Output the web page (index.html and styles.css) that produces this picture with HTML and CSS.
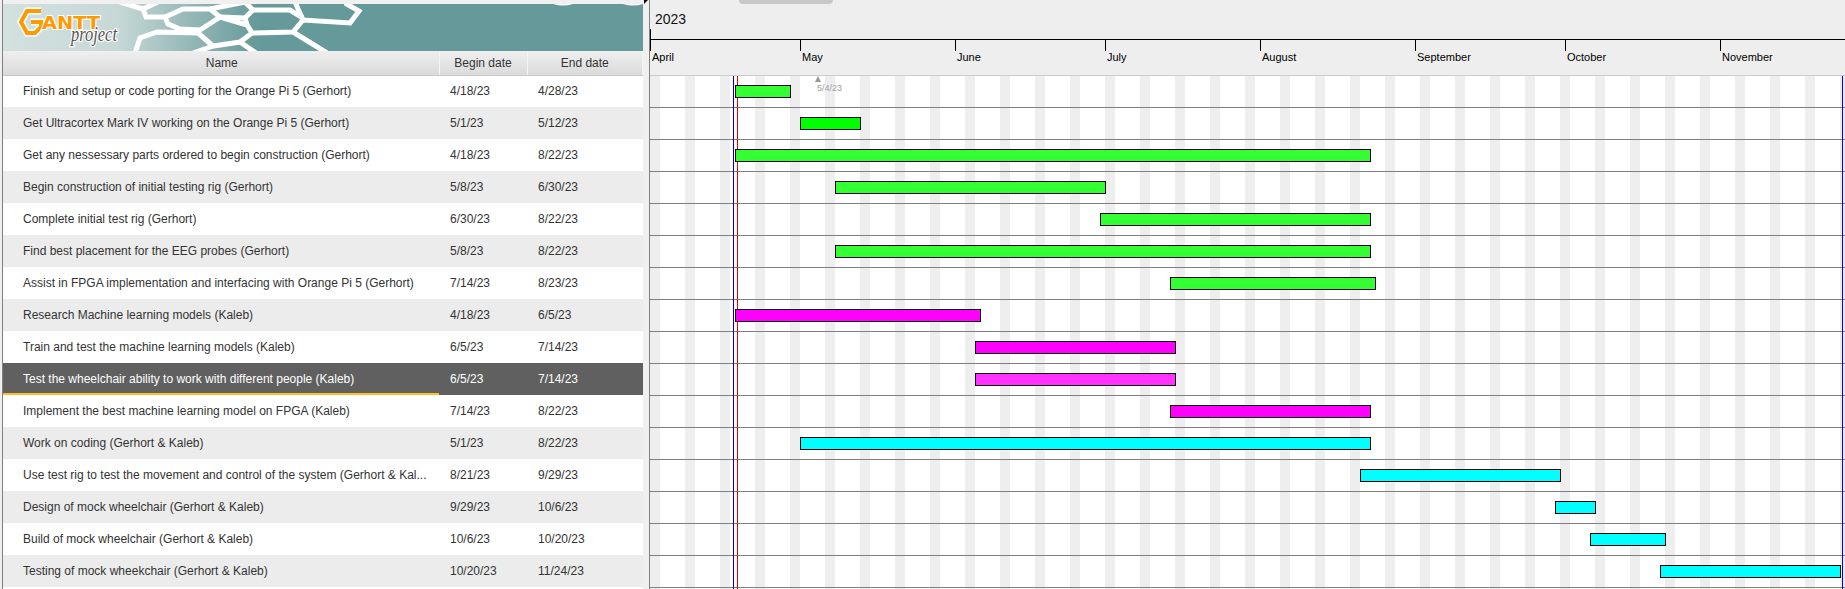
FILE: index.html
```html
<!DOCTYPE html>
<html>
<head>
    <meta charset="UTF-8">
    <meta name="viewport" content="width=device-width, initial-scale=1.0">
    <title>GanttProject</title>
    <link rel="stylesheet" href="styles.css">
</head>
<body>
    <div class="task-panel">
        <svg class="banner" viewBox="3 4 640 47" width="640" height="47">
            <defs>
                <linearGradient id="banner-fade" x1="0" x2="1" y1="0" y2="0">
                    <stop offset="0" stop-color="#d3e1df"/>
                    <stop offset="0.18" stop-color="#c6d8d6"/>
                    <stop offset="0.4" stop-color="#669999"/>
                    <stop offset="1" stop-color="#669999"/>
                </linearGradient>
            </defs>
            <rect x="3" y="4" width="640" height="47" fill="url(#banner-fade)"/>
            <!-- honeycomb -->
            <g class="comb">
                <path d="M120 2 L143 9 L146 17 L165 17 L168 24 L180 29 L200 30"/>
                <path d="M143 9 L158 2"/>
                <path d="M165 17 L183 9 L210 9 L220 17 L200 30 L198 33 L213 46 L240 42 L252 33 L247 25 L220 17"/>
                <path d="M210 9 L245 2"/>
                <path d="M220 17 L245 18 L253 10 L245 2"/>
                <path d="M245 18 L247 25"/>
                <path d="M253 10 L290 10 L303 18"/>
                <path d="M252 33 L293 32 L303 20 L350 23 L359 11 L345 3"/>
                <path d="M303 20 L295 2"/>
                <path d="M293 32 L327 53"/>
                <path d="M198 33 L157 32 L140 38 L135 53"/>
                <path d="M213 46 L193 53"/>
                <path d="M240 42 L256 53"/>
            </g>
            <path class="comb-top" d="M553 4 Q563 7 573 4 Z M623 4 Q633 7 643 4 Z"/>
            <!-- logo -->
            <polyline class="logo-edge" points="31,22 41,22 41,27 35,33 27,33 21,22 27,11 41,11"/>
            <polyline class="logo-mark" points="31,22 41,22 41,27 35,33 27,33 21,22 27,11 41,11"/>
            <text class="logo-word" x="42" y="29" textLength="58" lengthAdjust="spacingAndGlyphs">ANTT</text>
            <text class="logo-sub" x="71" y="41" textLength="46" lengthAdjust="spacingAndGlyphs">project</text>
        </svg>
        <table class="task-table">
            <thead>
                <tr>
                    <th class="col-name">Name</th>
                    <th class="col-date">Begin date</th>
                    <th class="col-end">End date</th>
                </tr>
            </thead>
            <tbody>
                <tr><td>Finish and setup or code porting for the Orange Pi 5 (Gerhort)</td><td>4/18/23</td><td>4/28/23</td></tr>
                <tr><td>Get Ultracortex Mark IV working on the Orange Pi 5 (Gerhort)</td><td>5/1/23</td><td>5/12/23</td></tr>
                <tr><td>Get any nessessary parts ordered to begin construction (Gerhort)</td><td>4/18/23</td><td>8/22/23</td></tr>
                <tr><td>Begin construction of initial testing rig (Gerhort)</td><td>5/8/23</td><td>6/30/23</td></tr>
                <tr><td>Complete initial test rig (Gerhort)</td><td>6/30/23</td><td>8/22/23</td></tr>
                <tr><td>Find best placement for the EEG probes (Gerhort)</td><td>5/8/23</td><td>8/22/23</td></tr>
                <tr><td>Assist in FPGA implementation and interfacing with Orange Pi 5 (Gerhort)</td><td>7/14/23</td><td>8/23/23</td></tr>
                <tr><td>Research Machine learning models (Kaleb)</td><td>4/18/23</td><td>6/5/23</td></tr>
                <tr><td>Train and test the machine learning models (Kaleb)</td><td>6/5/23</td><td>7/14/23</td></tr>
                <tr class="selected"><td>Test the wheelchair ability to work with different people (Kaleb)</td><td>6/5/23</td><td>7/14/23</td></tr>
                <tr><td>Implement the best machine learning model on FPGA (Kaleb)</td><td>7/14/23</td><td>8/22/23</td></tr>
                <tr><td>Work on coding (Gerhort &amp; Kaleb)</td><td>5/1/23</td><td>8/22/23</td></tr>
                <tr><td>Use test rig to test the movement and control of the system (Gerhort &amp; Kal...</td><td>8/21/23</td><td>9/29/23</td></tr>
                <tr><td>Design of mock wheelchair (Gerhort &amp; Kaleb)</td><td>9/29/23</td><td>10/6/23</td></tr>
                <tr><td>Build of mock wheelchair (Gerhort &amp; Kaleb)</td><td>10/6/23</td><td>10/20/23</td></tr>
                <tr><td>Testing of mock wheekchair (Gerhort &amp; Kaleb)</td><td>10/20/23</td><td>11/24/23</td></tr>
            </tbody>
        </table>
    </div>

    <div class="splitter"></div>

    <div class="chart">
        <div class="chart-head">
            <div class="scroll-thumb"></div>
            <div class="year">2023</div>
            <div class="year-tick"></div>
            <div class="months">
                <div class="month m30">April</div>
                <div class="month m31">May</div>
                <div class="month m30">June</div>
                <div class="month m31">July</div>
                <div class="month m31">August</div>
                <div class="month m30">September</div>
                <div class="month m31">October</div>
                <div class="month m30">November</div>
            </div>
        </div>
        <div class="chart-body">
            <div class="today-blue"></div>
            <div class="today-red"></div>
            <div class="right-edge"></div>
            <div class="milestone">
                <div class="milestone-arrow"></div>
                <div>5/4/23</div>
            </div>
            <div class="row"><div class="bar green" style="margin-left:85px;width:56px"></div></div>
            <div class="row"><div class="bar lime" style="margin-left:150px;width:61px"></div></div>
            <div class="row"><div class="bar green" style="margin-left:85px;width:636px"></div></div>
            <div class="row"><div class="bar green" style="margin-left:185px;width:271px"></div></div>
            <div class="row"><div class="bar green" style="margin-left:450px;width:271px"></div></div>
            <div class="row"><div class="bar green" style="margin-left:185px;width:536px"></div></div>
            <div class="row"><div class="bar green" style="margin-left:520px;width:206px"></div></div>
            <div class="row"><div class="bar magenta" style="margin-left:85px;width:246px"></div></div>
            <div class="row"><div class="bar magenta" style="margin-left:325px;width:201px"></div></div>
            <div class="row"><div class="bar pink" style="margin-left:325px;width:201px"></div></div>
            <div class="row"><div class="bar magenta" style="margin-left:520px;width:201px"></div></div>
            <div class="row"><div class="bar cyan" style="margin-left:150px;width:571px"></div></div>
            <div class="row"><div class="bar cyan" style="margin-left:710px;width:201px"></div></div>
            <div class="row"><div class="bar cyan" style="margin-left:905px;width:41px"></div></div>
            <div class="row"><div class="bar cyan" style="margin-left:940px;width:76px"></div></div>
            <div class="row"><div class="bar cyan" style="margin-left:1010px;width:181px"></div></div>
        </div>
    </div>
</body>
</html>
```

FILE: styles.css
```css
html, body {
    height: 100%;
}
body {
    display: flex;
    margin: 0;
    overflow: hidden;
    background-color: #f0f0f0;
    color: #333;
    font-family: "Liberation Sans", Arial, sans-serif;
    font-size: 12px;
}

/* task table on the left */
.task-panel {
    flex: 0 0 640px;
    margin-left: 2px;
    padding-top: 4px;
    border-left: 1px solid #808080;
    background: linear-gradient(#f0f0f0, #f0f0f0) top / 100% 4px no-repeat #fff;
}
.banner {
    display: block;
}
.comb {
    fill: none;
    stroke: #fff;
    stroke-width: 5;
    stroke-linejoin: miter;
}
.comb-top {
    fill: #fff;
}
.logo-edge {
    fill: none;
    stroke: #fff;
    stroke-width: 7;
}
.logo-mark {
    fill: none;
    stroke: #ff9900;
    stroke-width: 4;
}
.logo-word {
    fill: #ff9900;
    stroke: #fff;
    stroke-width: 2;
    paint-order: stroke;
    font-family: "DejaVu Sans", sans-serif;
    font-size: 18px;
    font-weight: bold;
}
.logo-sub {
    fill: #555;
    stroke: #fff;
    stroke-width: 2.5;
    paint-order: stroke;
    font-family: "Liberation Serif", serif;
    font-size: 20px;
    font-style: italic;
}
.task-table {
    width: 640px;
    table-layout: fixed;
    border-collapse: collapse;
}
.task-table th {
    height: 24px;
    box-sizing: border-box;
    padding: 0;
    border-right: 1px solid #f4f4f4;
    border-bottom: 1px solid #c8c8c8;
    background: linear-gradient(#efefef, #dadada);
    font-weight: normal;
    text-align: center;
}
.col-name {
    width: 436px;
    padding-left: 2px !important;
}
.col-date {
    width: 88px;
}
.task-table td {
    height: 32px;
    box-sizing: border-box;
    padding: 0 0 0 11px;
    white-space: nowrap;
    overflow: hidden;
}
.task-table td:first-child {
    padding-left: 20px;
}
.task-table tbody tr:nth-child(even) {
    background-color: #ececec;
}
.task-table tbody tr.selected {
    background-color: #606060;
    color: #fff;
}
.task-table tr.selected td:first-child {
    box-shadow: inset 0 -2px 0 #ffc125;
}

/* splitter */
.splitter {
    position: relative;
    flex: 0 0 6px;
}
.splitter::before {
    content: "";
    position: absolute;
    top: 0;
    left: 1px;
    border-top: 4px solid #000;
    border-right: 4px solid transparent;
}

/* chart on the right */
.chart {
    flex: 1;
    display: flex;
    flex-direction: column;
    min-width: 0;
    overflow: hidden;
    border-left: 1px solid #808080;
}
.chart-head {
    position: relative;
    flex: 0 0 76px;
    box-sizing: border-box;
    background-color: #eee;
    border-bottom: 1px solid #ccc;
}
.scroll-thumb {
    position: absolute;
    top: 0;
    left: 89px;
    width: 94px;
    height: 4px;
    background-color: #c8c8c8;
    border-radius: 0 0 4px 4px;
}
.year {
    height: 29px;
    box-sizing: border-box;
    padding: 11px 0 0 5px;
    color: #111;
    font-size: 14px;
    line-height: 16px;
}
.year-tick {
    width: 1px;
    height: 10px;
    background-color: #000;
}
.months {
    display: flex;
    border-top: 1px solid #000;
    width: 1300px;
}
.month {
    box-sizing: border-box;
    padding: 11px 0 0 2px;
    background: linear-gradient(#000, #000) left top / 1px 11px no-repeat;
    color: #000;
    font-size: 11px;
    line-height: 13px;
}
.m30 {
    flex: 0 0 150px;
}
.m31 {
    flex: 0 0 155px;
}
.chart-body {
    position: relative;
    flex: 1;
    background: repeating-linear-gradient(to right, #eee 0, #eee 10px, #fff 10px, #fff 35px);
}
.row {
    height: 32px;
    box-sizing: border-box;
    padding-top: 9px;
    border-bottom: 1px solid #808080;
}
.bar {
    position: relative;
    z-index: 2;
    height: 13px;
    box-sizing: border-box;
    border: 1px solid #000;
}
.green {
    background-color: #33ff33;
}
.lime {
    background-color: #00ff00;
}
.magenta {
    background-color: #ff00ff;
}
.pink {
    background-color: #ff33ff;
}
.cyan {
    background-color: #00ffff;
}
.today-blue, .today-red, .right-edge {
    position: absolute;
    top: 0;
    bottom: 0;
    z-index: 1;
    width: 1px;
}
.today-blue {
    left: 83px;
    background-color: #0000c0;
}
.today-red {
    left: 87px;
    background-color: #f00000;
}
.right-edge {
    left: 1192px;
    background-color: #0000ff;
}
.milestone {
    position: absolute;
    top: 0;
    left: 167px;
    color: #a0a0a0;
    font-size: 9px;
    line-height: 10px;
}
.milestone-arrow {
    width: 0;
    height: 0;
    margin: 0 0 1px -2px;
    border-left: 3px solid transparent;
    border-right: 3px solid transparent;
    border-bottom: 6px solid #999;
}
```
